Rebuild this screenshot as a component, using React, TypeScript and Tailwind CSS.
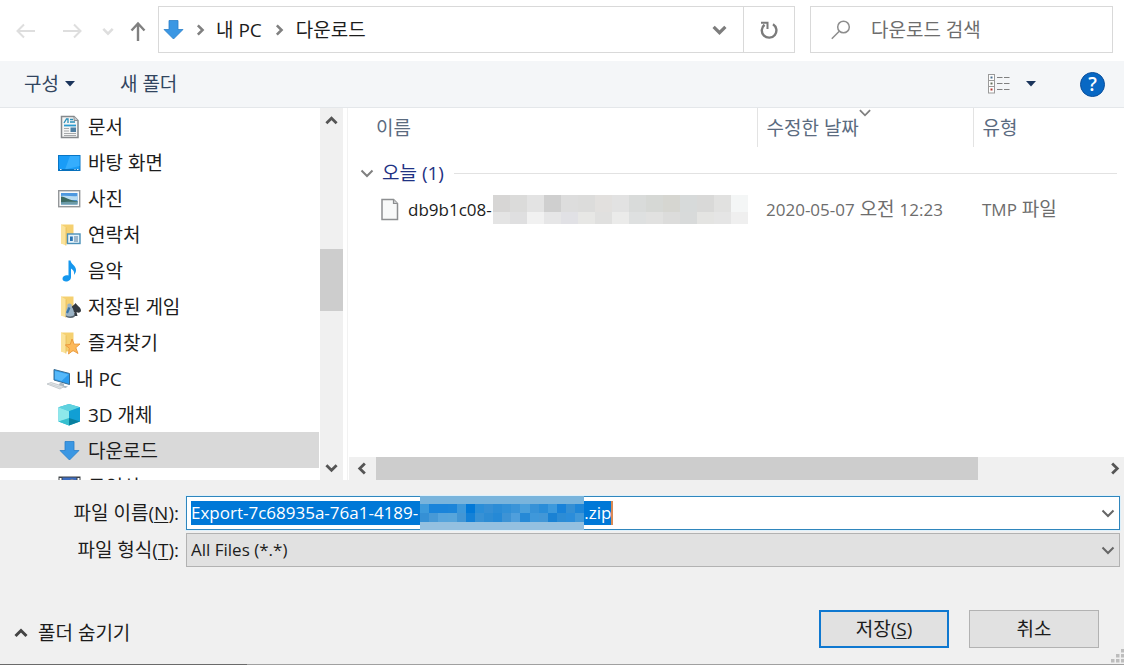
import React from "react";

type IconProps = { className?: string };

function Chevron({
  dir,
  className = "",
  size = 13,
  thick = 2,
}: {
  dir: "up" | "down" | "left" | "right";
  className?: string;
  size?: number;
  thick?: number;
}) {
  const paths = {
    up: "M1.5 10 L7 4.5 L12.5 10",
    down: "M1.5 4.5 L7 10 L12.5 4.5",
    left: "M9.5 1.5 L4 7 L9.5 12.5",
    right: "M4.5 1.5 L10 7 L4.5 12.5",
  };
  return (
    <svg viewBox="0 0 14 14" width={size} height={size} fill="none" stroke="currentColor" strokeWidth={thick} className={`shrink-0 ${className}`} aria-hidden="true">
      <path d={paths[dir]} />
    </svg>
  );
}

function DownloadIcon({ className = "" }: IconProps) {
  return (
    <svg viewBox="0 0 24 24" className={`h-6 w-6 shrink-0 ${className}`} aria-hidden="true">
      <path d="M7 2.500h9v9h5L11.500 21 2 11.500h5z" fill="#3b97e3" stroke="#2a7fc9" strokeWidth="0.8" />
    </svg>
  );
}

function DocumentIcon() {
  return (
    <svg viewBox="0 0 24 24" className="h-6 w-6 shrink-0" aria-hidden="true">
      <path d="M3.500 1.500h12.500l4 4v17H3.500z" fill="#f4f5f5" stroke="#85898c" strokeWidth="1.500" />
      <path d="M16 1.500v4h4" fill="#c9cdd0" stroke="#85898c" strokeWidth="0.900" />
      <path d="M6 8l2.500-4H10v4M12 4.500h3M12 7h5" stroke="#2b8fb8" strokeWidth="1.300" fill="none" />
      <path d="M6 10.500h12" stroke="#2b9bd0" strokeWidth="1.800" />
      <path d="M6 13.500h5M6 16h5M6 18.500h12M6 20.500h12" stroke="#a6a9ab" strokeWidth="1.100" />
      <rect x="12.500" y="12.500" width="5.500" height="4.500" fill="#4d7fa3" />
    </svg>
  );
}

function DesktopIcon() {
  return (
    <svg viewBox="0 0 24 24" className="h-6 w-6 shrink-0" aria-hidden="true">
      <rect x="0.500" y="4.500" width="21.500" height="15" fill="#199cf7" stroke="#0876c6" />
      <path d="M12 5h9.500v10L7 18.500z" fill="#35adfd" />
      <path d="M1 18.800h20.500" stroke="#0868ae" strokeWidth="1.200" />
      <path d="M2 18.500h1.500M16.500 18.500h1M19 18.500h1.500" stroke="#d8efff" strokeWidth="1.200" />
    </svg>
  );
}

function PictureIcon() {
  return (
    <svg viewBox="0 0 24 24" className="h-6 w-6 shrink-0" aria-hidden="true">
      <rect x="0.700" y="3.700" width="21" height="16" fill="#fafafa" stroke="#94979a" strokeWidth="1.400" />
      <rect x="3" y="6" width="16.500" height="11.500" fill="#4e98df" />
      <path d="M3 9c6-1 11 1 16.500 0v4H3z" fill="#b9dcf2" />
      <path d="M3 9.500c5 .5 8 4 16.500 4.500v1.500H3z" fill="#3d6a62" />
      <path d="M3 15.500c6-1.500 10 0 16.500-1v3H3z" fill="#6c9ba7" />
    </svg>
  );
}

function FolderBase() {
  return (
    <>
      <path d="M3 1.500h12.500v19H3z" fill="#f5d070" />
      <path d="M3 1.500l5 3v18l-5-2z" fill="#fbe39b" />
      <path d="M8 4.500v18" stroke="#e4b850" strokeWidth="0.700" />
    </>
  );
}

function ContactsIcon() {
  return (
    <svg viewBox="0 0 24 24" className="h-6 w-6 shrink-0" aria-hidden="true">
      <FolderBase />
      <rect x="9.500" y="11" width="12.500" height="9.500" fill="#e4f2fa" stroke="#4b90b8" strokeWidth="1.400" />
      <rect x="12" y="13.500" width="2.800" height="4.500" fill="#2874b5" />
      <path d="M16 14h4M16 16h4M16 18h4" stroke="#527b9b" strokeWidth="1" />
    </svg>
  );
}

function MusicIcon() {
  return (
    <svg viewBox="0 0 24 24" className="h-6 w-6 shrink-0" aria-hidden="true">
      <path d="M10.500 1.500h2c.5 4 5.500 5 5.500 9.500 0 2-.8 3.500-2 5 .5-3.500-.5-5-3-6.500v8.500c0 2.800-2.300 4.500-5 4.500-2 0-3.500-1-3.500-2.800 0-2.500 3-4.200 6-3.200z" fill="#1597ee" />
    </svg>
  );
}

function GamesIcon() {
  return (
    <svg viewBox="0 0 24 24" className="h-6 w-6 shrink-0" aria-hidden="true">
      <FolderBase />
      <path d="M17.500 8c2 3 5.500 4.500 5.500 7.500 0 2-2.500 3-4.500 1.500l1 4h-4l1-4c-2 1-4.500 0-4.500-2 0-3 4-4.500 5.500-7z" fill="#343a40" />
      <path d="M11.500 8.500c1.800 0 2.800 1.500 2.200 3.300 1.800 2 2.300 5 2.800 8.700-2.500 2.800-7 2.800-9 0 .5-3.500.5-6.500 2-9-.6-1.700.3-3 2-3z" fill="#9bb3c5" />
      <path d="M11.500 12.500c-1 2-1.500 3.500-2.500 5.500" stroke="#3976a8" strokeWidth="2.200" />
      <path d="M8 21c2 1.500 6 1.500 8.500 0" stroke="#58656f" strokeWidth="1.500" fill="none" />
    </svg>
  );
}

function FavoritesIcon() {
  return (
    <svg viewBox="0 0 24 24" className="h-6 w-6 shrink-0" aria-hidden="true">
      <FolderBase />
      <path d="M14 8l2.200 5.200 5.800-.2-4.200 3.700 2.200 5.800-5-3-4.500 3.500.8-5.800-4-3.200 5-.6z" fill="#fdb95a" stroke="#e8963a" strokeWidth="0.900" />
    </svg>
  );
}

function PcIcon() {
  return (
    <svg viewBox="0 0 24 24" className="h-6 w-6 shrink-0" aria-hidden="true">
      <path d="M7 2.500l15.500 4v11L7 13z" fill="#2b9cef" stroke="#3a6c91" strokeWidth="1" />
      <path d="M8 4l13.500 3.500-7 6.500L8 12z" fill="#56b9fa" />
      <path d="M13 15.500l4 1.200v2l4 .8-2.500 1.500-7-2z" fill="#a9b7c1" />
      <path d="M0 17l4-1.500 13 4-4 2.500z" fill="#e3e6e8" stroke="#b4babe" strokeWidth="0.700" />
      <path d="M3 17l11 3.500" stroke="#c7cdd0" strokeWidth="0.800" />
    </svg>
  );
}

function CubeIcon() {
  return (
    <svg viewBox="0 0 24 24" className="h-6 w-6 shrink-0" aria-hidden="true">
      <path d="M11 1l11 3.200v14.300L11 22.500.500 18.500V4.200z" fill="#27b5d3" />
      <path d="M.500 4.200L11 1l11 3.200-11 4z" fill="#5fd2df" />
      <path d="M.500 4.200l10.500 4v8L.500 18.500z" fill="#8ee9eb" />
      <path d="M22 4.200l-11 4v8l11 2.300z" fill="#119fd4" />
      <path d="M.500 18.500L11 15v7.500z" fill="#37c0cf" />
      <path d="M22 18.500L11 15v7.500z" fill="#087f9f" />
    </svg>
  );
}

function VideoIcon() {
  return (
    <svg viewBox="0 0 24 24" className="h-6 w-6 shrink-0" aria-hidden="true">
      <rect x="0.500" y="1.500" width="22" height="20" fill="#3e4347" />
      <rect x="4.500" y="2.500" width="14" height="17" fill="#3c6cc0" />
      <circle cx="14" cy="8" r="3.500" fill="#e0a15a" />
      <path d="M2.500 3v18M20.500 3v18" stroke="#fff" strokeWidth="2" strokeDasharray="2 2" />
    </svg>
  );
}

function FileIcon() {
  return (
    <svg viewBox="0 0 18 24" className="h-6 w-[18px] shrink-0" aria-hidden="true">
      <path d="M1 1.500h11.500l4 4v16H1z" fill="#f8f9f9" stroke="#8d8f91" strokeWidth="1.500" />
      <path d="M12.500 1.500v4h4" fill="#cfd1d2" stroke="#8d8f91" strokeWidth="1.200" />
    </svg>
  );
}

function DetailsIcon() {
  return (
    <svg viewBox="0 0 22 20" width="22" height="20" aria-hidden="true">
      <g fill="#fdfdfd" stroke="#9a9a9a" strokeWidth="1">
        <rect x="0.500" y="0.500" width="6" height="6" />
        <rect x="0.500" y="6.500" width="6" height="6" />
        <rect x="0.500" y="12.500" width="6" height="6.500" />
      </g>
      <path d="M2.500 3.500h2" stroke="#4c7090" strokeWidth="2" />
      <path d="M2.500 9.500h2" stroke="#66705c" strokeWidth="2" />
      <path d="M2.500 15.500h2" stroke="#b33a32" strokeWidth="2" />
      <path d="M9 3.500h5.500M16 3.500h5.500M9 9.500h5.500M16 9.500h5.500M9 15.500h5.500M16 15.500h5.500" stroke="#808080" strokeWidth="1.200" />
    </svg>
  );
}

function Caret() {
  return (
    <svg viewBox="0 0 10 6" width="10" height="6" aria-hidden="true">
      <path d="M0 0h10L5 5.500z" fill="#1b355c" />
    </svg>
  );
}

const places = [
  { label: "문서", icon: <DocumentIcon /> },
  { label: "바탕 화면", icon: <DesktopIcon /> },
  { label: "사진", icon: <PictureIcon /> },
  { label: "연락처", icon: <ContactsIcon /> },
  { label: "음악", icon: <MusicIcon /> },
  { label: "저장된 게임", icon: <GamesIcon /> },
  { label: "즐겨찾기", icon: <FavoritesIcon /> },
  { label: "내 PC", icon: <PcIcon />, root: true },
  { label: "3D 개체", icon: <CubeIcon /> },
  { label: "다운로드", icon: <DownloadIcon />, selected: true },
  { label: "동영상", icon: <VideoIcon /> },
];

const greyTop = ["#d7d6d5", "#dbdbda", "#e3e3e3", "#cfcfcf", "#dddddd", "#dcdcdb", "#e2e0de", "#e2e2e2", "#d9dbda", "#d6d8d5", "#d6d6d1", "#d7dada", "#d9d9d8", "#e1e1e0", "#f4f6f6"];
const greyBottom = ["#e4e4e4", "#dfdfe0", "#f1f1f1", "#e6e6e7", "#e1e1e5", "#e7e7e5", "#e0e0df", "#ebebea", "#dee0e0", "#e1e1e0", "#dcdcdb", "#d8dada", "#e4e4e2", "#e5e5e5", "#efefef"];
const blueTop = ["#3d9adb", "#1a84da", "#1a84da", "#1c85d9", "#3d98da", "#0279d8", "#2b8ed8", "#358fd5", "#2b8cd6", "#3190d7", "#3a94d8", "#4a9fdb", "#3792d7", "#2a8dd8", "#3c99dc", "#1882d9", "#348fd4", "#1e86d8"];
const blueBottom = ["#3590d5", "#4799d6", "#56a4dc", "#57a5db", "#4296d5", "#1481d7", "#3791d5", "#2d8cd4", "#2589d6", "#3d93d5", "#4f9fdc", "#2689d6", "#3f98da", "#4297d7", "#1a82d4", "#2c8cd5", "#2b8dda", "#4098d9"];

function MosaicRow({ colors, className }: { colors: string[]; className: string }) {
  return (
    <span className={`flex ${className}`}>
      {colors.map((c, i) => (
        <span key={i} className="flex-1" style={{ backgroundColor: c }} />
      ))}
    </span>
  );
}

export default function App() {
  return (
    <div className="flex h-screen min-h-[420px] flex-col overflow-hidden bg-[#f0f0f0] font-['Open_Sans','Noto_Sans_CJK_KR',sans-serif] text-[19px] leading-6 text-[#1c1c1c]">
      <header className="flex h-[61px] shrink-0 items-center bg-white pr-[11px] pb-0.5">
        <div className="flex w-[158px] shrink-0 items-center pt-0.5 pl-4">
          <button aria-label="뒤로" className="mr-[26px] text-[#dedede]">
            <svg viewBox="0 0 20 16" width="20" height="16" fill="none" stroke="currentColor" strokeWidth="2" aria-hidden="true">
              <path d="M19 8H2M8 1.500L1.500 8 8 14.500" />
            </svg>
          </button>
          <button aria-label="앞으로" className="mr-5 text-[#dedede]">
            <svg viewBox="0 0 20 16" width="20" height="16" fill="none" stroke="currentColor" strokeWidth="2" aria-hidden="true">
              <path d="M1 8h17M12 1.500L18.500 8 12 14.500" />
            </svg>
          </button>
          <button aria-label="최근 위치" className="mr-4 text-[#dedede]">
            <Chevron dir="down" size={12} thick={3} />
          </button>
          <button aria-label="위로" className="text-[#808080]">
            <svg viewBox="0 0 16 20" width="16" height="20" fill="none" stroke="currentColor" strokeWidth="2.400" aria-hidden="true">
              <path d="M8 20V3M1.500 9.500L8 2.500l6.500 7" />
            </svg>
          </button>
        </div>
        <div className="flex h-[47px] min-w-0 flex-1 border border-[#d9d9d9]">
          <div className="flex min-w-0 flex-1 items-center pr-4 pl-[3px]">
            <DownloadIcon />
            <Chevron dir="right" className="mx-2 text-[#808080]" size={12} thick={3} />
            <a href="#pc" className="ml-0.5 whitespace-nowrap">내 PC</a>
            <Chevron dir="right" className="mx-[11px] text-[#808080]" size={12} thick={3} />
            <a href="#downloads" className="whitespace-nowrap">다운로드</a>
            <button aria-label="이전 위치" className="ml-auto text-[#7d7d7d]">
              <Chevron dir="down" size={15} thick={3} />
            </button>
          </div>
          <button aria-label="새로 고침" className="flex w-[51px] shrink-0 items-center justify-center border-l border-[#d9d9d9] text-[#7b7b7b]">
            <svg viewBox="0 0 18 20" width="18" height="20" fill="none" stroke="currentColor" strokeWidth="2.400" aria-hidden="true">
              <path d="M13 4.200a7.300 7.300 0 1 1-8.500.500" />
              <path d="M1 2.800h6.500V9" strokeWidth="2" />
            </svg>
          </button>
        </div>
        <label className="ml-[15px] flex h-[47px] w-[303px] shrink-0 items-center border border-[#d9d9d9] pl-5">
          <svg viewBox="0 0 20 20" width="20" height="20" fill="none" stroke="#8d8d8d" strokeWidth="1.500" className="mr-5 shrink-0" aria-hidden="true">
            <circle cx="12.500" cy="7" r="5.800" />
            <path d="M8.300 11.200L.8 18.700" />
          </svg>
          <input type="search" aria-label="다운로드 검색" placeholder="다운로드 검색" className="w-full min-w-0 bg-transparent outline-none placeholder:text-[#6d6d6d]" />
        </label>
      </header>

      <div className="flex h-[47px] shrink-0 items-center border-b border-[#e4e7ea] bg-[#f4f6f8] pr-[19px] pl-6 text-[#31455f]">
        <button className="flex items-center gap-1.5">
          구성 <Caret />
        </button>
        <button className="ml-[45px]">새 폴더</button>
        <button aria-label="보기 변경" className="ml-auto flex items-center gap-4">
          <DetailsIcon />
          <Caret />
        </button>
        <button aria-label="도움말" className="ml-11 flex h-[25px] w-[25px] items-center justify-center rounded-full border border-[#0a4f9c] bg-[#0868c4] font-semibold text-white">
          ?
        </button>
      </div>

      <div className="flex min-h-0 flex-1 bg-white">
        <nav className="w-80 shrink-0 overflow-hidden">
          <ul>
            {places.map((p) => (
              <li key={p.label}>
                <a
                  href="#place"
                  className={`mr-px flex h-9 items-center pt-0.5 ${p.root ? "gap-[5px] pl-[47px]" : "gap-1.5 pl-[58px]"} ${p.selected ? "bg-[#d9d9d9]" : ""}`}
                >
                  {p.icon}
                  {p.label}
                </a>
              </li>
            ))}
          </ul>
        </nav>
        <div className="flex w-[23px] shrink-0 flex-col items-center bg-[#f0f0f0] py-1.5 text-[#555]">
          <Chevron dir="up" size={13} thick={3} />
          <div className="flex w-full flex-1 flex-col">
            <div className="flex-[122]" />
            <div className="h-[62px] bg-[#cdcdcd]" />
            <div className="flex-[151]" />
          </div>
          <Chevron dir="down" size={13} thick={3} />
        </div>
        <div className="w-[5px] shrink-0 border-r border-[#f2f2f2]" />

        <main className="flex min-w-0 flex-1 flex-col pl-px">
          <table className="w-full table-fixed border-collapse text-left">
            <colgroup>
              <col />
              <col className="w-[216px]" />
              <col className="w-[151px]" />
            </colgroup>
            <thead>
              <tr className="h-[39px] text-[#5b6b7f]">
                <th className="pl-[27px] font-normal">이름</th>
                <th className="relative border-l border-[#e3e3e3] pl-[9px] font-normal">
                  수정한 날짜
                  <Chevron dir="down" size={13} thick={2} className="absolute -top-0.5 left-1/2 -translate-x-1/2 text-[#808080]" />
                </th>
                <th className="border-l border-[#e3e3e3] pl-[9px] font-normal">유형</th>
              </tr>
            </thead>
            <tbody>
              <tr className="h-12">
                <th colSpan={3} className="pt-1 pr-[7px] pl-[11px] font-normal text-[#1f3283]">
                  <div className="flex items-center">
                    <Chevron dir="down" size={14} thick={2} className="mr-2 text-[#808080]" />
                    오늘 (1)
                    <span className="ml-2.5 h-px flex-1 bg-[#e2e2e2]" />
                  </div>
                </th>
              </tr>
              <tr className="text-[#6d6d6d]">
                <td className="pl-8 text-[#1c1c1c]">
                  <div className="flex items-center">
                    <FileIcon />
                    <span className="mr-px ml-[9px] text-[17px]">db9b1c08-</span>
                    <span className="flex w-[255px] shrink-0 flex-col">
                      <MosaicRow colors={greyTop} className="h-[17px]" />
                      <MosaicRow colors={greyBottom} className="h-3" />
                    </span>
                  </div>
                </td>
                <td className="pl-[9px] whitespace-nowrap">
                  <span className="text-[17px]">2020-05-07</span> 오전 <span className="text-[17px]">12:23</span>
                </td>
                <td className="pl-[9px] whitespace-nowrap">
                  <span className="text-[17px]">TMP</span> 파일
                </td>
              </tr>
            </tbody>
          </table>
          <div className="mt-auto flex h-[23px] shrink-0 items-center bg-[#f0f0f0] text-[#555]">
            <Chevron dir="left" size={13} thick={3} className="mx-[7px]" />
            <div className="flex h-full flex-1">
              <div className="flex-[603] bg-[#cdcdcd]" />
              <div className="flex-[130]" />
            </div>
            <Chevron dir="right" size={13} thick={3} className="mr-[3px]" />
          </div>
        </main>
      </div>

      <footer className="shrink-0 pt-4">
        <div className="grid grid-cols-[179px_1fr] gap-x-[7px] gap-y-[3px] pr-1">
          <label htmlFor="file-name" className="self-center text-right whitespace-nowrap">
            파일 이름(<u className="underline-offset-2">N</u>):
          </label>
          <div className="flex h-[34px] min-w-0 items-center border border-[#2f86bd] bg-white px-1 text-[17px] outline outline-[#dff1fb]">
            <input
              id="file-name"
              type="text"
              defaultValue="Export-7c68935a-76a1-4189-"
              className="field-sizing-content h-6 bg-[#0078d7] pr-0.5 text-white outline-none"
            />
            <span className="-my-1 flex w-[164px] shrink-0 flex-col">
              <span className="h-[9px] bg-[#79b4dc]" />
              <MosaicRow colors={blueTop} className="h-[9px]" />
              <MosaicRow colors={blueBottom} className="h-[9px]" />
              <span className="h-[9px] bg-[#94c0e0]" />
            </span>
            <span className="h-6 border-r-2 border-[#d98a55] bg-[#0078d7] text-white">.zip</span>
            <button aria-label="파일 이름 목록" className="ml-auto text-[#666]">
              <Chevron dir="down" size={14} thick={2} />
            </button>
          </div>
          <label htmlFor="file-type" className="self-center text-right whitespace-nowrap">
            파일 형식(<u className="underline-offset-2">T</u>):
          </label>
          <div className="relative h-[34px]">
            <select id="file-type" className="h-full w-full appearance-none border border-[#b2b2b2] bg-[#e1e1e1] pl-1 text-[17px]">
              <option>All Files (*.*)</option>
            </select>
            <Chevron dir="down" size={14} thick={2} className="pointer-events-none absolute top-[10px] right-[5px] text-[#666]" />
          </div>
        </div>
        <div className="mt-[43px] flex h-[38px] items-center pr-[25px] pl-3.5">
          <button className="mt-2 flex items-center gap-2.5">
            <Chevron dir="up" size={14} thick={3} className="text-[#444]" />
            폴더 숨기기
          </button>
          <button className="ml-auto h-[38px] w-[130px] border-2 border-[#0f78d0] bg-[#e1e1e1]">
            저장(<u className="underline-offset-2">S</u>)
          </button>
          <button className="ml-5 h-[38px] w-[130px] border border-[#b2b2b2] bg-[#e1e1e1]">취소</button>
        </div>
        <div className="flex h-4 justify-end pt-px">
          <svg viewBox="0 0 13 14" width="13" height="14" fill="#bdbdbd" aria-hidden="true">
            <path d="M10 0h3v3.500h-3zM5 5h3.500v3.500H5zM10 5h3v3.500h-3zM0 10h3.500v3.500H0zM5 10h3.500v3.500H5zM10 10h3v3.500h-3z" />
          </svg>
        </div>
        <div className="flex h-px">
          <div className="w-[22%] bg-[#6a6a6a]" />
          <div className="flex-1 bg-[#a0a0a0]" />
        </div>
      </footer>
    </div>
  );
}
